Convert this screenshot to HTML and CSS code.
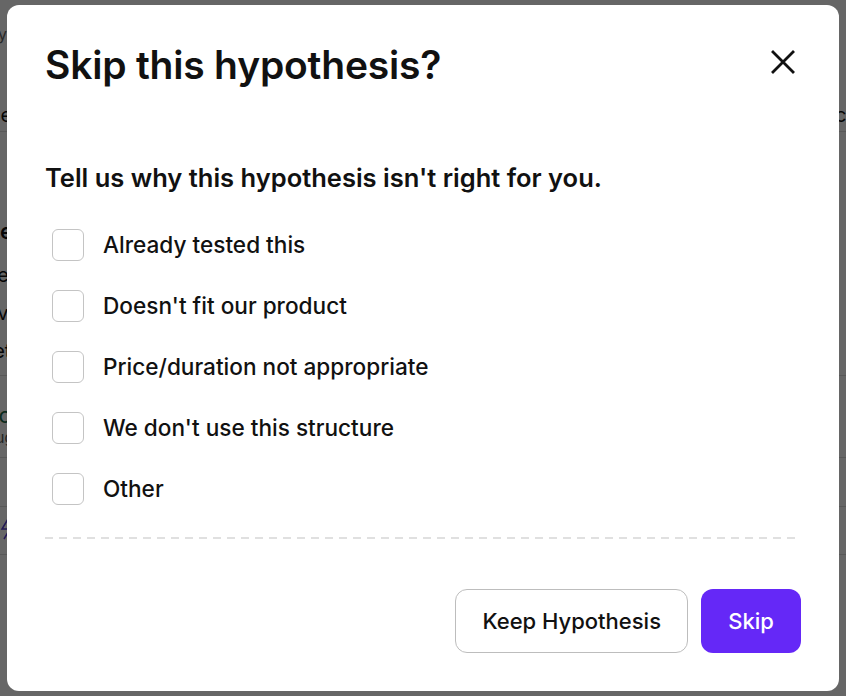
FILE: index.html
```html
<!DOCTYPE html>
<html lang="en">
<head>
    <meta charset="UTF-8">
    <meta name="viewport" content="width=device-width, initial-scale=1.0">
    <title>Skip this hypothesis?</title>
    <link rel="stylesheet" href="styles.css">
</head>
<body>
    <div class="page" aria-hidden="true">
        <div class="page-crumb">Hypotheses</div>
        <div class="page-head">
            <span>Description</span>
            <span>Price</span>
        </div>
        <div class="page-row tall">
            <div class="row-title">Reduce checkout friction</div>
            <div class="row-text">Test a one-step checkout flow with a simplified summary to see if conversion goes up for every</div>
            <div class="row-text">returning customer on mobile.</div>
        </div>
        <div class="page-row">
            <div class="row-green">Top pick</div>
            <div class="row-small">Suggested by the team</div>
        </div>
        <div class="page-row short"></div>
        <div class="page-row icon-row">
            <svg width="24" height="24" viewBox="0 0 24 24" fill="none" stroke="#5b3fd6" stroke-width="1.5"><path d="M14 2 8 12h8l-6 10"/></svg>
        </div>
        <div class="page-price">Total $50.00</div>
    </div>

    <div class="overlay">
        <div class="modal" role="dialog" aria-labelledby="modal-title">
            <div class="modal-header">
                <h2 class="modal-title" id="modal-title">Skip this hypothesis?</h2>
                <button class="close-btn" aria-label="Close">
                    <svg width="26" height="26" viewBox="0 0 26 26" fill="none" stroke="#111" stroke-width="2.8" stroke-linecap="square"><path d="M3 3l20 20M23 3 3 23"/></svg>
                </button>
            </div>

            <p class="modal-question">Tell us why this hypothesis isn't right for you.</p>

            <div class="reasons">
                <label class="reason"><input type="checkbox"><span class="box"></span>Already tested this</label>
                <label class="reason"><input type="checkbox"><span class="box"></span>Doesn't fit our product</label>
                <label class="reason"><input type="checkbox"><span class="box"></span>Price/duration not appropriate</label>
                <label class="reason"><input type="checkbox"><span class="box"></span>We don't use this structure</label>
                <label class="reason"><input type="checkbox"><span class="box"></span>Other</label>
            </div>

            <div class="divider"></div>

            <div class="modal-actions">
                <button class="btn btn-outline">Keep Hypothesis</button>
                <button class="btn btn-primary">Skip</button>
            </div>
        </div>
    </div>
</body>
</html>
```

FILE: styles.css
```css
body {
    margin: 0;
    font-family: Inter, "Noto Sans", sans-serif;
    color: #111;
    background: #fff;
    overflow: hidden;
}

/* page behind the dialog */
.page {
    margin-left: -14px;
    width: 872px;
}

.page-crumb {
    height: 56px;
    padding-top: 24px;
    box-sizing: border-box;
    font-size: 16px;
    color: #666;
}

.page-head {
    display: flex;
    justify-content: space-between;
    height: 76px;
    align-items: flex-end;
    padding-bottom: 4px;
    box-sizing: border-box;
    font-size: 20px;
    border-bottom: 1px solid #ddd;
}

.page-row {
    border-bottom: 1px solid #ddd;
    padding: 10px 0;
}

.page-row.tall {
    padding-top: 86px;
    height: 244px;
    box-sizing: border-box;
}

.row-title {
    font-size: 22px;
    font-weight: 600;
    margin-bottom: 12px;
}

.row-text {
    font-size: 20px;
    line-height: 38px;
}

.row-green {
    font-size: 22px;
    color: #1d6b4a;
    margin-top: 16px;
}

.row-small {
    font-size: 15px;
    color: #555;
}

.page-row.short {
    height: 28px;
}

.icon-row {
    padding-left: 8px;
    height: 48px;
    box-sizing: border-box;
}

.page-price {
    font-size: 28px;
    font-weight: 600;
    padding-left: 40px;
    padding-top: 18px;
}

/* dialog */
.overlay {
    position: fixed;
    inset: 0;
    background: rgba(0, 0, 0, 0.6);
    display: flex;
    justify-content: center;
    align-items: center;
}

.modal {
    width: 832px;
    height: 686px;
    box-sizing: border-box;
    background: #fff;
    border-radius: 12px;
    padding: 38px;
    display: flex;
    flex-direction: column;
}

.modal-header {
    display: flex;
    justify-content: space-between;
    align-items: flex-start;
}

.modal-title {
    margin: 0;
    font-size: 39px;
    font-weight: 600;
    letter-spacing: -0.2px;
    line-height: 44px;
}

.close-btn {
    border: none;
    background: none;
    padding: 0;
    margin: 6px 5px 0 0;
    cursor: pointer;
    display: flex;
}

.modal-question {
    margin: 74px 0 0;
    font-size: 25.5px;
    font-weight: 600;
    line-height: 34px;
}

.reasons {
    display: flex;
    flex-direction: column;
    gap: 29px;
    margin-top: 34px;
}

.reason {
    display: flex;
    align-items: center;
    gap: 19px;
    font-size: 22.6px;
    font-weight: 500;
    line-height: 32px;
    cursor: pointer;
}

.reason input {
    display: none;
}

.box {
    width: 30px;
    height: 30px;
    margin-left: 7px;
    border: 1px solid #c4c4c4;
    border-radius: 6px;
}

.divider {
    margin-top: 32px;
    height: 2px;
    background: repeating-linear-gradient(to right, #e0e0e0 0 8px, transparent 8px 14px);
}

.modal-actions {
    margin-top: auto;
    display: flex;
    justify-content: flex-end;
    gap: 13px;
}

.btn {
    height: 64px;
    border-radius: 12px;
    font-family: inherit;
    font-size: 22px;
    font-weight: 500;
    padding: 0 26px;
    cursor: pointer;
}

.btn-outline {
    background: #fff;
    border: 1px solid #bdbdbd;
    color: #111;
}

.btn-primary {
    background: #6528f7;
    border: none;
    color: #fff;
    width: 100px;
}
```
